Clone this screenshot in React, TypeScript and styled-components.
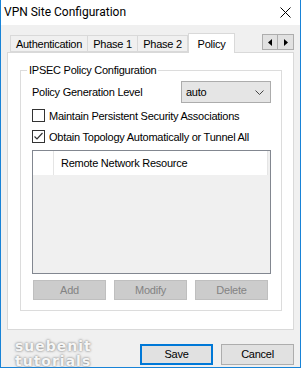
import React from 'react';
import styled, { createGlobalStyle } from 'styled-components';

const Global = createGlobalStyle`
  html, body {
    margin: 0;
    padding: 0;
    background: #ffffff;
  }
  body {
    font-family: 'Liberation Sans', Arial, sans-serif;
    font-size: 11px;
    letter-spacing: -0.25px;
    color: #000000;
    white-space: nowrap;
  }
`;

const Window = styled.div`
  width: 301px;
  height: 368px;
  box-sizing: border-box;
  border: 1px solid #1883d7;
  border-top: none;
  display: flex;
  flex-direction: column;
  background: #f0f0f0;
`;

const TitleBar = styled.div`
  height: 25px;
  background: #ffffff;
  display: flex;
  align-items: center;
  justify-content: space-between;
  padding: 0 9px 0 3px;
`;

const Title = styled.span`
  font-family: Roboto, 'Liberation Sans', sans-serif;
  font-size: 12px;
  letter-spacing: 0;
  line-height: 25px;
`;

const Body = styled.div`
  flex: 1;
  display: flex;
  flex-direction: column;
  padding: 8px 6px 7px 6px;
`;

const TabStrip = styled.div`
  display: flex;
  align-items: flex-end;
  height: 19px;
  padding-left: 3px;
`;

const Tab = styled.div<{ $w: number; $active?: boolean }>`
  width: ${(p) => p.$w}px;
  height: ${(p) => (p.$active ? 20 : 17)}px;
  box-sizing: border-box;
  border: 1px solid #d9d9d9;
  border-bottom: ${(p) => (p.$active ? 'none' : '1px solid #d9d9d9')};
  border-left: ${(p) => (p.$active ? '1px solid #d9d9d9' : 'none')};
  background: ${(p) => (p.$active ? '#ffffff' : '#f0f0f0')};
  display: flex;
  align-items: center;
  justify-content: center;
  padding-top: ${(p) => (p.$active ? 0 : 1)}px;
  margin-bottom: ${(p) => (p.$active ? -1 : 0)}px;
  position: relative;
  z-index: ${(p) => (p.$active ? 1 : 0)};
  &:first-child {
    border-left: 1px solid #d9d9d9;
  }
`;

const Spacer = styled.div`
  flex: 1;
`;

const ScrollButtons = styled.div`
  display: flex;
  align-self: flex-start;
  margin-top: 1px;
`;

const ScrollButton = styled.div`
  width: 16px;
  height: 16px;
  box-sizing: border-box;
  border: 1px solid #adadad;
  background: #e1e1e1;
  display: flex;
  align-items: center;
  justify-content: center;
  & + & {
    border-left: none;
  }
`;

const Panel = styled.div`
  height: 278px;
  box-sizing: border-box;
  border: 1px solid #d9d9d9;
  background: #ffffff;
  padding: 11px 11px 0 12px;
`;

const Group = styled.fieldset`
  margin: 0;
  box-sizing: border-box;
  border: 1px solid #dcdcdc;
  padding: 4px 10px 10px 11px;
  display: flex;
  flex-direction: column;
`;

const Legend = styled.legend`
  padding: 0 2px;
  margin-left: -5px;
  font-size: 11px;
  line-height: 13px;
`;

const FieldRow = styled.div`
  display: flex;
  align-items: center;
  justify-content: space-between;
  height: 22px;
`;

const Combo = styled.div`
  width: 90px;
  height: 22px;
  box-sizing: border-box;
  border: 1px solid #acacac;
  background: #e5e5e5;
  display: flex;
  align-items: center;
  justify-content: space-between;
  padding: 0 6px 0 4px;
`;

const CheckRow = styled.label<{ $top: number }>`
  display: flex;
  align-items: center;
  gap: 4px;
  height: 13px;
  margin-top: ${(p) => p.$top}px;
`;

const Box = styled.span`
  width: 13px;
  height: 13px;
  box-sizing: border-box;
  border: 1px solid #333333;
  background: #ffffff;
  display: flex;
  align-items: center;
  justify-content: center;
`;

const List = styled.div`
  margin-top: 7px;
  height: 124px;
  box-sizing: border-box;
  border: 1px solid #828790;
  background: #f0f0f0;
  display: flex;
  flex-direction: column;
`;

const ListHeader = styled.div`
  height: 24px;
  background: #ffffff;
  display: flex;
  margin-right: 2px;
`;

const HeaderCell = styled.div<{ $w?: number }>`
  ${(p) => (p.$w ? `width: ${p.$w}px;` : 'flex: 1;')}
  box-sizing: border-box;
  border-right: 1px solid #e5e5e5;
  display: flex;
  align-items: center;
  padding-left: 7px;
`;

const ButtonRow = styled.div`
  display: flex;
  gap: 8px;
  margin-top: 6px;
  padding-left: 1px;
`;

const DisabledButton = styled.div`
  width: 73px;
  height: 20px;
  box-sizing: border-box;
  border: 1px solid #bfbfbf;
  background: #cccccc;
  color: #838383;
  display: flex;
  align-items: center;
  justify-content: center;
`;

const Footer = styled.div`
  display: flex;
  align-items: center;
  margin-top: 9px;
  gap: 8px;
`;

const Watermark = styled.div`
  flex: 1;
  padding-left: 8px;
  font-family: 'DejaVu Sans', sans-serif;
  font-weight: bold;
  font-size: 14px;
  line-height: 15px;
  letter-spacing: 1px;
  color: #f6f6f6;
  text-shadow: 0 0 2px #8a8a8a, 0 0 3px #a8a8a8;
`;

const DialogButton = styled.button<{ $default?: boolean }>`
  width: 73px;
  height: 21px;
  box-sizing: border-box;
  border: ${(p) => (p.$default ? '2px solid #0078d7' : '1px solid #adadad')};
  background: #e1e1e1;
  font-family: inherit;
  font-size: 11px;
  letter-spacing: inherit;
  color: #000000;
  padding: 0;
`;

function Close() {
  return (
    <svg width="11" height="11" viewBox="0 0 11 11">
      <path d="M0.5 0.5 L10.5 10.5 M10.5 0.5 L0.5 10.5" stroke="#000" strokeWidth="1" />
    </svg>
  );
}

function Arrow({ dir }: { dir: 'left' | 'right' }) {
  return (
    <svg width="4" height="7" viewBox="0 0 4 7">
      {dir === 'left' ? <path d="M4 0 L0 3.5 L4 7 Z" fill="#000" /> : <path d="M0 0 L4 3.5 L0 7 Z" fill="#000" />}
    </svg>
  );
}

function Chevron() {
  return (
    <svg width="9" height="5" viewBox="0 0 9 5">
      <path d="M0.5 0.5 L4.5 4.5 L8.5 0.5" stroke="#444" fill="none" strokeWidth="1" />
    </svg>
  );
}

function Check({ checked }: { checked?: boolean }) {
  return (
    <Box>
      {checked && (
        <svg width="11" height="11" viewBox="0 0 11 11">
          <path d="M1.5 5.5 L4 8 L9.5 2" stroke="#333" fill="none" strokeWidth="1.2" />
        </svg>
      )}
    </Box>
  );
}

export default function App() {
  return (
    <>
      <Global />
      <Window>
        <TitleBar>
          <Title>VPN Site Configuration</Title>
          <Close />
        </TitleBar>
        <Body>
          <TabStrip>
            <Tab $w={78}>Authentication</Tab>
            <Tab $w={50}>Phase 1</Tab>
            <Tab $w={50}>Phase 2</Tab>
            <Tab $w={47} $active>
              Policy
            </Tab>
            <Spacer />
            <ScrollButtons>
              <ScrollButton>
                <Arrow dir="left" />
              </ScrollButton>
              <ScrollButton>
                <Arrow dir="right" />
              </ScrollButton>
            </ScrollButtons>
          </TabStrip>
          <Panel>
            <Group>
              <Legend>IPSEC Policy Configuration</Legend>
              <FieldRow>
                <span>Policy Generation Level</span>
                <Combo>
                  <span>auto</span>
                  <Chevron />
                </Combo>
              </FieldRow>
              <CheckRow $top={6}>
                <Check />
                <span>Maintain Persistent Security Associations</span>
              </CheckRow>
              <CheckRow $top={8}>
                <Check checked />
                <span>Obtain Topology Automatically or Tunnel All</span>
              </CheckRow>
              <List>
                <ListHeader>
                  <HeaderCell $w={21} />
                  <HeaderCell>Remote Network Resource</HeaderCell>
                </ListHeader>
              </List>
              <ButtonRow>
                <DisabledButton>Add</DisabledButton>
                <DisabledButton>Modify</DisabledButton>
                <DisabledButton>Delete</DisabledButton>
              </ButtonRow>
            </Group>
          </Panel>
          <Footer>
            <Watermark>
              suebenit
              <br />
              tutorials
            </Watermark>
            <DialogButton $default>Save</DialogButton>
            <DialogButton>Cancel</DialogButton>
          </Footer>
        </Body>
      </Window>
    </>
  );
}
